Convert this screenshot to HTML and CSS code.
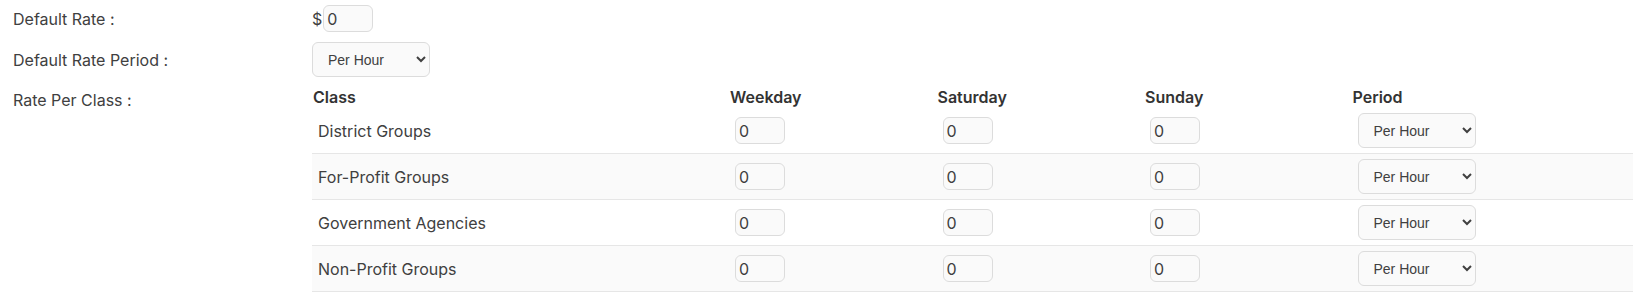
FILE: index.html
```html
<!DOCTYPE html>
<html lang="en">
<head>
    <meta charset="UTF-8">
    <meta name="viewport" content="width=device-width, initial-scale=1.0">
    <title>Rates</title>
    <link rel="stylesheet" href="styles.css">
</head>
<body>
    <!-- Default rate -->
    <div class="form-row row-rate">
        <label class="field-label" for="rate">Default Rate :</label>
        <div class="field">
            <span class="currency">$</span><input type="text" id="rate" class="num-input" value="0">
        </div>
    </div>

    <div class="form-row row-period">
        <label class="field-label" for="period">Default Rate Period :</label>
        <div class="field">
            <select id="period" class="period-select">
                <option>Per Hour</option>
                <option>Per Day</option>
            </select>
        </div>
    </div>

    <!-- Rate per class table -->
    <div class="form-row row-class">
        <div class="field-label">Rate Per Class :</div>
        <table class="rate-table">
            <thead>
                <tr>
                    <th class="col-class">Class</th>
                    <th class="col-day">Weekday</th>
                    <th class="col-day">Saturday</th>
                    <th class="col-day">Sunday</th>
                    <th class="col-period">Period</th>
                </tr>
            </thead>
            <tbody>
                <tr>
                    <td>District Groups</td>
                    <td><input type="text" class="num-input" value="0"></td>
                    <td><input type="text" class="num-input" value="0"></td>
                    <td><input type="text" class="num-input" value="0"></td>
                    <td><select class="period-select"><option>Per Hour</option><option>Per Day</option></select></td>
                </tr>
                <tr>
                    <td>For-Profit Groups</td>
                    <td><input type="text" class="num-input" value="0"></td>
                    <td><input type="text" class="num-input" value="0"></td>
                    <td><input type="text" class="num-input" value="0"></td>
                    <td><select class="period-select"><option>Per Hour</option><option>Per Day</option></select></td>
                </tr>
                <tr>
                    <td>Government Agencies</td>
                    <td><input type="text" class="num-input" value="0"></td>
                    <td><input type="text" class="num-input" value="0"></td>
                    <td><input type="text" class="num-input" value="0"></td>
                    <td><select class="period-select"><option>Per Hour</option><option>Per Day</option></select></td>
                </tr>
                <tr>
                    <td>Non-Profit Groups</td>
                    <td><input type="text" class="num-input" value="0"></td>
                    <td><input type="text" class="num-input" value="0"></td>
                    <td><input type="text" class="num-input" value="0"></td>
                    <td><select class="period-select"><option>Per Hour</option><option>Per Day</option></select></td>
                </tr>
            </tbody>
        </table>
    </div>
</body>
</html>
```

FILE: styles.css
```css
body {
    margin: 0;
    font-family: Inter, "Liberation Sans", Arial, sans-serif;
    font-size: 16px;
    color: #404040;
    background: #fff;
}
.form-row {
    display: grid;
    grid-template-columns: 312px 1fr;
    align-items: center;
}
.field-label {
    padding-left: 13px;
}
.row-rate {
    padding-top: 5px;
}
.row-period {
    margin-top: 10px;
}
.row-class {
    margin-top: 9px;
    align-items: start;
}
.row-class .field-label {
    line-height: 22px;
    padding-top: 3px;
}
.currency {
    font-size: 16px;
    margin-right: 1px;
    vertical-align: middle;
}
.num-input {
    width: 50px;
    height: 27px;
    box-sizing: border-box;
    padding: 2px 3px;
    font-family: Inter, "Liberation Sans", sans-serif;
    font-size: 16px;
    color: #404040;
    background: #fafafa;
    border: 1px solid #dcdcdc;
    border-radius: 6px;
    vertical-align: middle;
}
.period-select {
    width: 118px;
    height: 35px;
    padding: 0 8px 0 11px;
    font-family: "Liberation Sans", Arial, sans-serif;
    font-size: 14px;
    color: #404040;
    background: #fafafa;
    border: 1px solid #dcdcdc;
    border-radius: 6px;
}
.rate-table {
    width: 100%;
    table-layout: fixed;
    border-collapse: collapse;
}
.rate-table th {
    text-align: left;
    font-size: 16px;
    font-weight: 600;
    color: #333;
    height: 22px;
    padding: 0 1px;
    vertical-align: middle;
}
.col-class {
    width: 415px;
}
.col-day {
    width: 205.5px;
}
.rate-table td {
    height: 45px;
    padding: 0 6px;
    border-bottom: 1px solid #e6e6e6;
    vertical-align: middle;
}
.rate-table tbody tr:nth-child(even) {
    background: #fafafa;
}
```
